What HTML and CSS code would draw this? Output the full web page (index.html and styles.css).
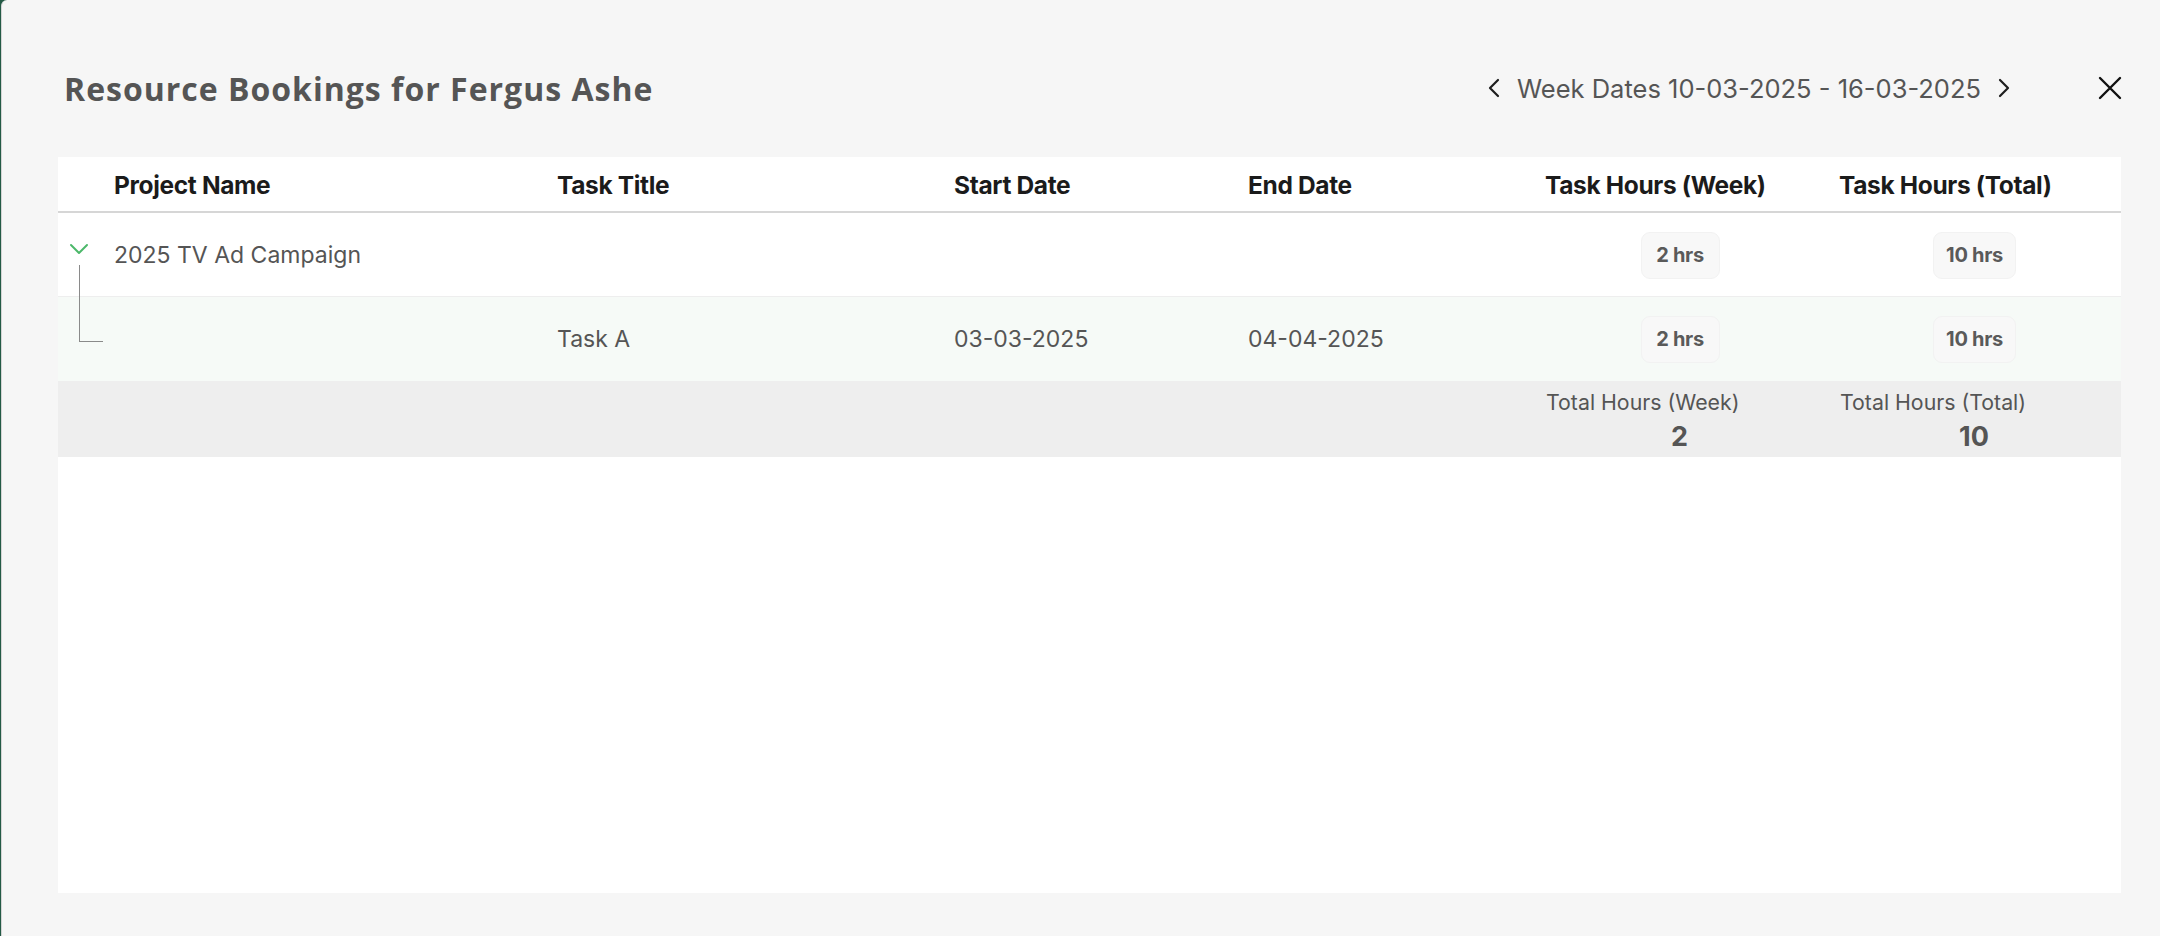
FILE: index.html
```html
<!DOCTYPE html>
<html lang="en">
<head>
<meta charset="utf-8">
<title>Resource Bookings</title>
<link rel="stylesheet" href="styles.css">
</head>
<body>
<div class="modal">
  <header class="modal-head">
    <h1 class="title">Resource Bookings for Fergus Ashe</h1>
    <div class="week-nav">
      <button class="nav-btn" aria-label="Previous week">
        <svg width="12" height="20" viewBox="0 0 12 20"><polyline points="10,2 2,10 10,18" fill="none" stroke="#1e1e1e" stroke-width="2.2" stroke-linecap="round" stroke-linejoin="round"/></svg>
      </button>
      <span class="week-label">Week Dates 10-03-2025 - 16-03-2025</span>
      <button class="nav-btn" aria-label="Next week">
        <svg width="12" height="20" viewBox="0 0 12 20"><polyline points="2,2 10,10 2,18" fill="none" stroke="#1e1e1e" stroke-width="2.2" stroke-linecap="round" stroke-linejoin="round"/></svg>
      </button>
    </div>
    <button class="close-btn" aria-label="Close">
      <svg width="24" height="24" viewBox="0 0 24 24"><path d="M2 2 L22 22 M22 2 L2 22" fill="none" stroke="#111" stroke-width="2.4" stroke-linecap="round"/></svg>
    </button>
  </header>

  <section class="panel">
    <div class="row head-row">
      <div class="cell"></div>
      <div class="cell">Project Name</div>
      <div class="cell">Task Title</div>
      <div class="cell">Start Date</div>
      <div class="cell">End Date</div>
      <div class="cell">Task Hours (Week)</div>
      <div class="cell">Task Hours (Total)</div>
    </div>

    <div class="row project-row">
      <div class="cell expander">
        <svg class="chev" width="20" height="12" viewBox="0 0 20 12"><polyline points="2,2 10,10 18,2" fill="none" stroke="#4cb86a" stroke-width="2" stroke-linecap="round" stroke-linejoin="round"/></svg>
      </div>
      <div class="cell">2025 TV Ad Campaign</div>
      <div class="cell"></div>
      <div class="cell"></div>
      <div class="cell"></div>
      <div class="cell center"><span class="badge">2 hrs</span></div>
      <div class="cell center"><span class="badge">10 hrs</span></div>
    </div>

    <div class="row task-row">
      <div class="cell branch"></div>
      <div class="cell"></div>
      <div class="cell">Task A</div>
      <div class="cell">03-03-2025</div>
      <div class="cell">04-04-2025</div>
      <div class="cell center"><span class="badge">2 hrs</span></div>
      <div class="cell center"><span class="badge">10 hrs</span></div>
    </div>

    <div class="row foot-row">
      <div class="cell"></div>
      <div class="cell"></div>
      <div class="cell"></div>
      <div class="cell"></div>
      <div class="cell"></div>
      <div class="cell total">
        <span class="total-label">Total Hours (Week)</span>
        <span class="total-value">2</span>
      </div>
      <div class="cell total">
        <span class="total-label">Total Hours (Total)</span>
        <span class="total-value">10</span>
      </div>
    </div>
  </section>
</div>
</body>
</html>
```

FILE: styles.css
```css
* { box-sizing: border-box; }

html, body {
  margin: 0;
  height: 100%;
  background: #245a46;
}

body {
  font-family: Inter, "Noto Sans", sans-serif;
  color: #555;
}

.modal {
  height: 936px;
  margin-left: 1px;
  background: #f6f6f6;
  border-left: 1px solid #d4d4d4;
  border-top-left-radius: 6px;
  padding: 0 39px 43px 56px;
  display: flex;
  flex-direction: column;
}

.modal-head {
  height: 157px;
  padding-top: 19px;
  display: flex;
  align-items: center;
}

.title {
  margin: 0 0 0 6px;
  font-family: "Open Sans", sans-serif;
  font-weight: 700;
  font-size: 32px;
  color: #555;
  letter-spacing: 1px;
  flex: 1;
}

.week-nav {
  display: flex;
  align-items: center;
  gap: 17px;
}

.nav-btn, .close-btn {
  background: none;
  border: 0;
  padding: 0;
  display: flex;
  align-items: center;
  cursor: pointer;
}

.week-label {
  font-size: 25.5px;
  color: #555;
}

.close-btn {
  margin-left: 88px;
  margin-right: -1px;
}

.panel {
  flex: 1;
  background: #fff;
}

.row {
  display: grid;
  grid-template-columns: 44px 443px 397px 294px 297px 294px 295px;
}

.cell {
  padding: 0 12px;
  display: flex;
  align-items: center;
  font-size: 23px;
  color: #555;
}

.center { justify-content: center; }

.head-row {
  height: 56px;
  border-bottom: 2px solid #d6d6d6;
}

.head-row .cell {
  font-weight: 700;
  font-size: 24.5px;
  color: #1b1b1b;
  letter-spacing: -0.35px;
  padding-top: 2px;
}

.project-row {
  height: 84px;
  border-bottom: 1px solid #eeeeee;
  padding-top: 1px;
}

.task-row {
  height: 84px;
  background: #f6faf7;
}

.badge {
  display: inline-flex;
  align-items: center;
  justify-content: center;
  min-width: 79px;
  height: 47px;
  padding: 0 12px;
  border-radius: 9px;
  background: #f8f8f8;
  border: 1px solid #f2f2f2;
  font-weight: 700;
  font-size: 20px;
  color: #5a5a5a;
  letter-spacing: -0.3px;
}

.expander {
  position: relative;
  padding: 0;
  align-items: flex-start;
}

.chev {
  margin: 29px 0 0 11px;
}

.expander::after {
  content: "";
  position: absolute;
  left: 21px;
  top: 51px;
  bottom: -1px;
  border-left: 1.5px solid #8a8a8a;
}

.branch {
  position: relative;
}

.branch::before {
  content: "";
  position: absolute;
  left: 21px;
  top: 0;
  width: 23px;
  height: 44px;
  border-left: 1.5px solid #8a8a8a;
  border-bottom: 1.5px solid #8a8a8a;
}

.foot-row {
  height: 76px;
  background: #eeeeee;
}

.total {
  flex-direction: column;
  align-items: stretch;
  justify-content: flex-start;
  padding: 8px 12px 0 13px;
}

.total-label {
  font-size: 21.3px;
  color: #555;
  line-height: 27px;
}

.total-value {
  margin-top: 3px;
  text-align: center;
  font-weight: 700;
  font-size: 27px;
  line-height: 36px;
  color: #555;
  padding-right: 2px;
}
```
